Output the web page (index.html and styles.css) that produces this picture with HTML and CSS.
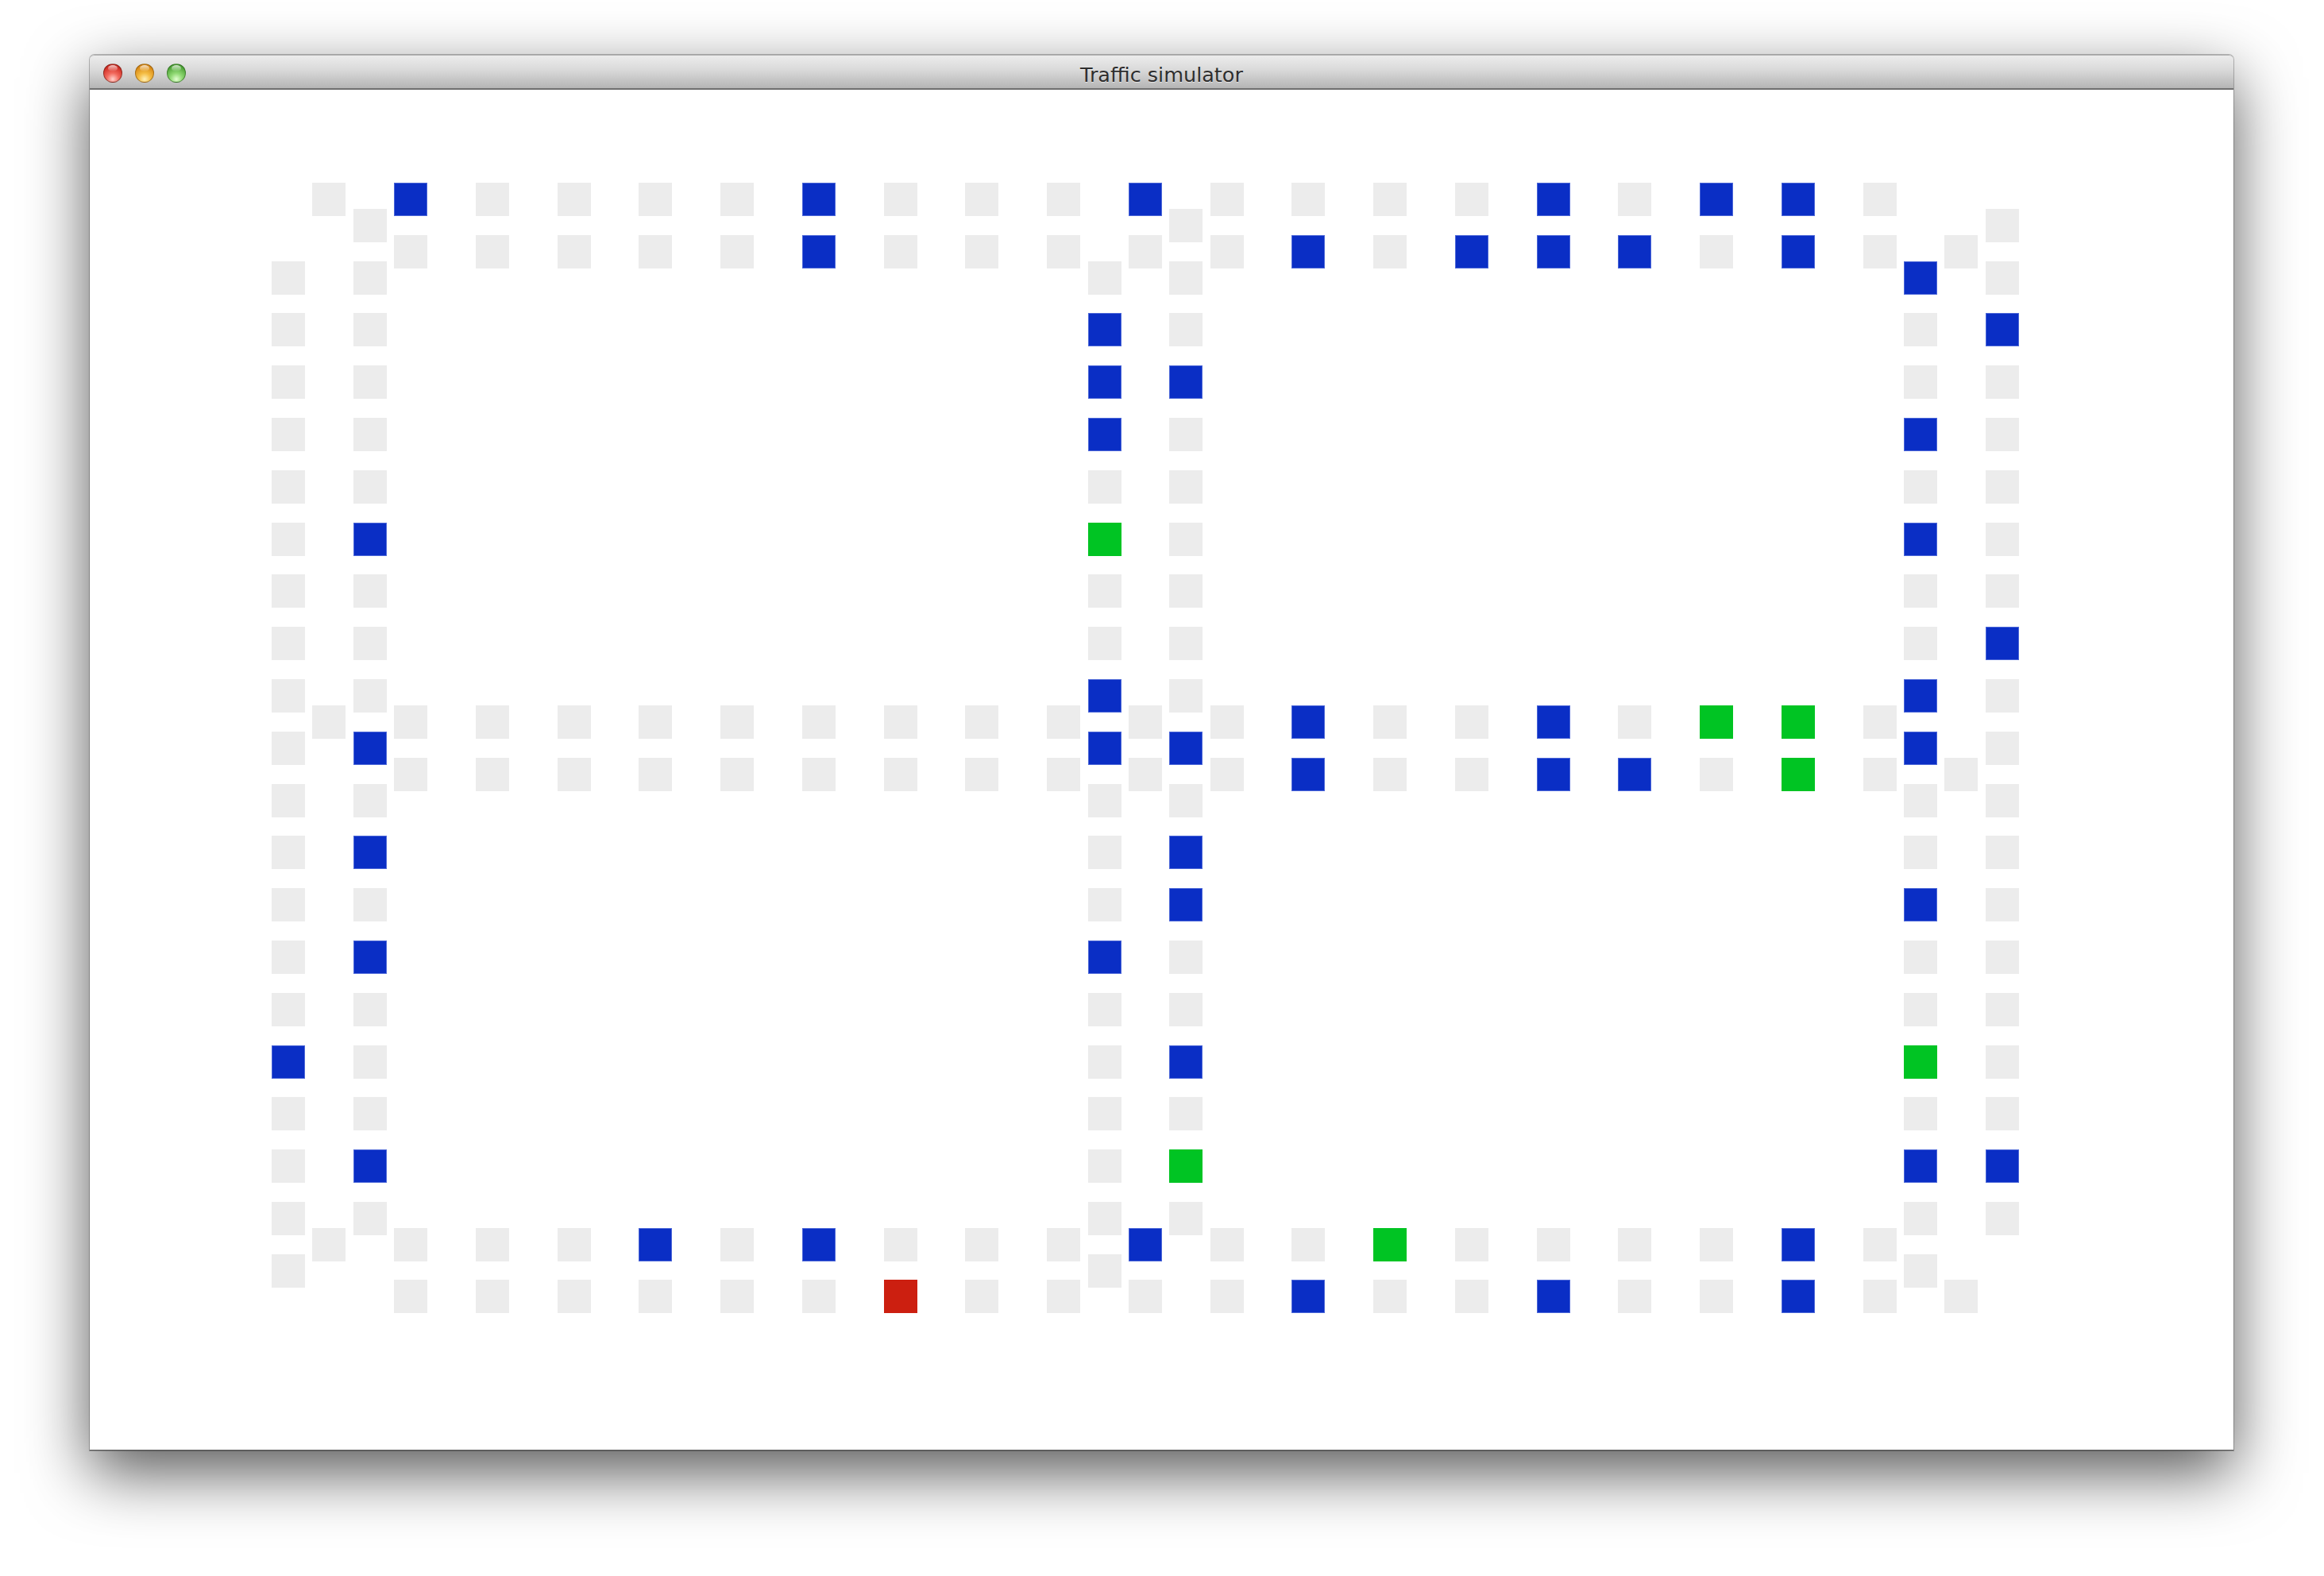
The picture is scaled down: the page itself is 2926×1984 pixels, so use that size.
FILE: index.html
```html
<!DOCTYPE html>
<html lang="en">
<head>
    <meta charset="UTF-8">
    <title>Traffic simulator</title>
    <link rel="stylesheet" href="styles.css">
</head>
<body>

    <div class="desktop">
        <div class="window">
            <div class="titlebar">
                <div class="lights">
                    <span class="light close"></span>
                    <span class="light minimize"></span>
                    <span class="light zoom"></span>
                </div>
                <div class="title">Traffic simulator</div>
                <div></div>
            </div>

            <div class="content">
                <div class="board">
                    <!-- top road -->
                    <div class="lane top-a">
                        <div class="cell"></div><div class="cell blue"></div><div class="cell"></div><div class="cell"></div><div class="cell"></div>
                        <div class="cell"></div><div class="cell blue"></div><div class="cell"></div><div class="cell"></div><div class="cell"></div>
                        <div class="cell blue"></div><div class="cell"></div><div class="cell"></div><div class="cell"></div><div class="cell"></div>
                        <div class="cell blue"></div><div class="cell"></div><div class="cell blue"></div><div class="cell blue"></div><div class="cell"></div>
                    </div>
                    <div class="lane top-b">
                        <div class="cell"></div><div class="cell"></div><div class="cell"></div><div class="cell"></div><div class="cell"></div>
                        <div class="cell blue"></div><div class="cell"></div><div class="cell"></div><div class="cell"></div><div class="cell"></div>
                        <div class="cell"></div><div class="cell blue"></div><div class="cell"></div><div class="cell blue"></div><div class="cell blue"></div>
                        <div class="cell blue"></div><div class="cell"></div><div class="cell blue"></div><div class="cell"></div><div class="cell"></div>
                    </div>

                    <!-- middle road -->
                    <div class="lane mid-a">
                        <div class="cell"></div><div class="cell"></div><div class="cell"></div><div class="cell"></div><div class="cell"></div>
                        <div class="cell"></div><div class="cell"></div><div class="cell"></div><div class="cell"></div><div class="cell"></div>
                        <div class="cell"></div><div class="cell"></div><div class="cell blue"></div><div class="cell"></div><div class="cell"></div>
                        <div class="cell blue"></div><div class="cell"></div><div class="cell green"></div><div class="cell green"></div><div class="cell"></div>
                    </div>
                    <div class="lane mid-b">
                        <div class="cell"></div><div class="cell"></div><div class="cell"></div><div class="cell"></div><div class="cell"></div>
                        <div class="cell"></div><div class="cell"></div><div class="cell"></div><div class="cell"></div><div class="cell"></div>
                        <div class="cell"></div><div class="cell blue"></div><div class="cell"></div><div class="cell"></div><div class="cell blue"></div>
                        <div class="cell blue"></div><div class="cell"></div><div class="cell green"></div><div class="cell"></div><div class="cell"></div>
                    </div>

                    <!-- bottom road -->
                    <div class="lane bot-a">
                        <div class="cell"></div><div class="cell"></div><div class="cell"></div><div class="cell"></div><div class="cell blue"></div>
                        <div class="cell"></div><div class="cell blue"></div><div class="cell"></div><div class="cell"></div><div class="cell"></div>
                        <div class="cell blue"></div><div class="cell"></div><div class="cell"></div><div class="cell green"></div><div class="cell"></div>
                        <div class="cell"></div><div class="cell"></div><div class="cell"></div><div class="cell blue"></div><div class="cell"></div>
                    </div>
                    <div class="lane bot-b">
                        <div class="cell"></div><div class="cell"></div><div class="cell"></div><div class="cell"></div><div class="cell"></div>
                        <div class="cell"></div><div class="cell red"></div><div class="cell"></div><div class="cell"></div><div class="cell"></div>
                        <div class="cell"></div><div class="cell blue"></div><div class="cell"></div><div class="cell"></div><div class="cell blue"></div>
                        <div class="cell"></div><div class="cell"></div><div class="cell blue"></div><div class="cell"></div><div class="cell"></div>
                    </div>

                    <!-- left road -->
                    <div class="lane v left-a">
                        <div class="cell"></div><div class="cell"></div><div class="cell"></div><div class="cell"></div><div class="cell"></div>
                        <div class="cell"></div><div class="cell"></div><div class="cell"></div><div class="cell"></div><div class="cell"></div>
                        <div class="cell"></div><div class="cell"></div><div class="cell"></div><div class="cell"></div><div class="cell"></div>
                        <div class="cell blue"></div><div class="cell"></div><div class="cell"></div><div class="cell"></div><div class="cell"></div>
                    </div>
                    <div class="lane v left-b">
                        <div class="cell"></div><div class="cell"></div><div class="cell"></div><div class="cell"></div><div class="cell"></div>
                        <div class="cell"></div><div class="cell blue"></div><div class="cell"></div><div class="cell"></div><div class="cell"></div>
                        <div class="cell blue"></div><div class="cell"></div><div class="cell blue"></div><div class="cell"></div><div class="cell blue"></div>
                        <div class="cell"></div><div class="cell"></div><div class="cell"></div><div class="cell blue"></div><div class="cell"></div>
                    </div>

                    <!-- middle vertical road -->
                    <div class="lane v center-a">
                        <div class="cell"></div><div class="cell blue"></div><div class="cell blue"></div><div class="cell blue"></div><div class="cell"></div>
                        <div class="cell green"></div><div class="cell"></div><div class="cell"></div><div class="cell blue"></div><div class="cell blue"></div>
                        <div class="cell"></div><div class="cell"></div><div class="cell"></div><div class="cell blue"></div><div class="cell"></div>
                        <div class="cell"></div><div class="cell"></div><div class="cell"></div><div class="cell"></div><div class="cell"></div>
                    </div>
                    <div class="lane v center-b">
                        <div class="cell"></div><div class="cell"></div><div class="cell"></div><div class="cell blue"></div><div class="cell"></div>
                        <div class="cell"></div><div class="cell"></div><div class="cell"></div><div class="cell"></div><div class="cell"></div>
                        <div class="cell blue"></div><div class="cell"></div><div class="cell blue"></div><div class="cell blue"></div><div class="cell"></div>
                        <div class="cell"></div><div class="cell blue"></div><div class="cell"></div><div class="cell green"></div><div class="cell"></div>
                    </div>

                    <!-- right road -->
                    <div class="lane v right-a">
                        <div class="cell blue"></div><div class="cell"></div><div class="cell"></div><div class="cell blue"></div><div class="cell"></div>
                        <div class="cell blue"></div><div class="cell"></div><div class="cell"></div><div class="cell blue"></div><div class="cell blue"></div>
                        <div class="cell"></div><div class="cell"></div><div class="cell blue"></div><div class="cell"></div><div class="cell"></div>
                        <div class="cell green"></div><div class="cell"></div><div class="cell blue"></div><div class="cell"></div><div class="cell"></div>
                    </div>
                    <div class="lane v right-b">
                        <div class="cell"></div><div class="cell"></div><div class="cell blue"></div><div class="cell"></div><div class="cell"></div>
                        <div class="cell"></div><div class="cell"></div><div class="cell"></div><div class="cell blue"></div><div class="cell"></div>
                        <div class="cell"></div><div class="cell"></div><div class="cell"></div><div class="cell"></div><div class="cell"></div>
                        <div class="cell"></div><div class="cell"></div><div class="cell"></div><div class="cell blue"></div><div class="cell"></div>
                    </div>
                </div>
            </div>
        </div>
    </div>

</body>
</html>
```

FILE: styles.css
```css
body {
    margin: 0;
    background: #ffffff;
    font-family: "DejaVu Sans", Verdana, sans-serif;
}
.desktop {
    min-height: 100vh;
    box-sizing: border-box;
    padding: 69px 0 0 113px;
    overflow: hidden;
}
.window {
    width: 2699px;
    background: white;
    border-radius: 6px 6px 0 0;
    box-shadow: 0 0 0 1px rgba(0, 0, 0, 0.25), 0 28px 80px rgba(0, 0, 0, 0.66);
}
.titlebar {
    display: grid;
    grid-template-columns: 1fr auto 1fr;
    height: 41px;
    border-top: 1px solid #b3b3b3;
    border-bottom: 2px solid #6f6f6f;
    border-radius: 6px 6px 0 0;
    background: linear-gradient(#ececec, #d9d9d9 45%, #b5b5b5);
}
.lights {
    display: flex;
    gap: 16px;
    padding: 10px 0 0 17px;
}
.light {
    position: relative;
    width: 24px;
    height: 24px;
    box-sizing: border-box;
    border-radius: 50%;
    border: 1px solid rgba(60, 20, 10, 0.45);
}
.light::before {
    content: "";
    position: absolute;
    left: 5px;
    top: 1px;
    width: 12px;
    height: 8px;
    border-radius: 50%;
    background: linear-gradient(rgba(255, 255, 255, 0.75), rgba(255, 255, 255, 0));
}
.close {
    background: radial-gradient(circle at 50% 85%, #ffd2cc 0%, #f26a5e 35%, #cf2d24 75%, #a8221b 100%);
}
.minimize {
    border-color: rgba(110, 70, 10, 0.5);
    background: radial-gradient(circle at 50% 85%, #fff1b8 0%, #f4bd45 35%, #d98a16 75%, #b06a10 100%);
}
.zoom {
    border-color: rgba(30, 80, 20, 0.5);
    background: radial-gradient(circle at 50% 85%, #e2ffd0 0%, #8fd873 35%, #4fa438 75%, #367a25 100%);
}
.title {
    padding-top: 7px;
    line-height: 34px;
    font-size: 25.5px;
    color: #2e2e2e;
    text-shadow: 0 1px 0 rgba(255, 255, 255, 0.6);
}
.content {
    height: 1713px;
    padding: 117px 0 0 229px;
    box-sizing: border-box;
    border-bottom: 1px solid #5a5a5a;
}
.board {
    display: grid;
    grid-template-columns: repeat(43, 51.38px);
    grid-template-rows: repeat(43, 32.9px);
}
.lane {
    display: flex;
    gap: 60.76px;
    align-self: start;
}
.lane.v {
    flex-direction: column;
    gap: 23.8px;
}
.cell {
    flex-shrink: 0;
    width: 42px;
    height: 42px;
    background: #ececec;
}
.blue {
    background: #0a2ec5;
    box-shadow: inset 0 0 0 1px #4d68d8;
}
.green {
    background: #00c423;
}
.red {
    background: #cc1f10;
}

/* horizontal lanes */
.top-a { grid-row: 1; grid-column: 2 / 41; }
.top-b { grid-row: 3; grid-column: 4 / 43; }
.mid-a { grid-row: 21; grid-column: 2 / 41; }
.mid-b { grid-row: 23; grid-column: 4 / 43; }
.bot-a { grid-row: 41; grid-column: 2 / 41; }
.bot-b { grid-row: 43; grid-column: 4 / 43; }

/* vertical lanes */
.left-a { grid-column: 1; grid-row: 4 / 43; }
.left-b { grid-column: 3; grid-row: 2 / 41; }
.center-a { grid-column: 21; grid-row: 4 / 43; }
.center-b { grid-column: 23; grid-row: 2 / 41; }
.right-a { grid-column: 41; grid-row: 4 / 43; }
.right-b { grid-column: 43; grid-row: 2 / 41; }
```
